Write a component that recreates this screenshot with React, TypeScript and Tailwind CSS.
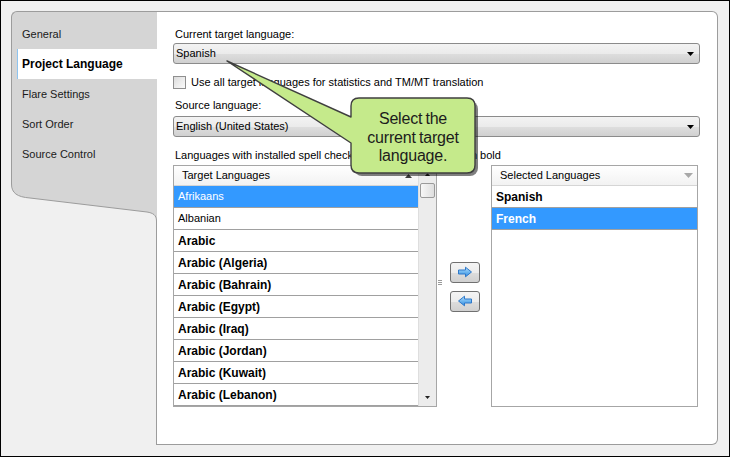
import React from 'react'

const targetRows = [
  { t: 'Afrikaans', b: false, sel: true },
  { t: 'Albanian', b: false },
  { t: 'Arabic', b: true },
  { t: 'Arabic (Algeria)', b: true },
  { t: 'Arabic (Bahrain)', b: true },
  { t: 'Arabic (Egypt)', b: true },
  { t: 'Arabic (Iraq)', b: true },
  { t: 'Arabic (Jordan)', b: true },
  { t: 'Arabic (Kuwait)', b: true },
  { t: 'Arabic (Lebanon)', b: true },
]

const selectedRows = [
  { t: 'Spanish', sel: false },
  { t: 'French', sel: true },
]

const tabs = ['General', 'Project Language', 'Flare Settings', 'Sort Order', 'Source Control']

function Caret() {
  return (
    <svg width="7" height="4" viewBox="0 0 7 4"><path d="M0 0H7L3.5 4Z" fill="#000" /></svg>
  )
}

function Dropdown({ value }: { value: string }) {
  return (
    <div className="h-[21px] flex items-center justify-between rounded-[3px] border border-[#8b8b8b] bg-[linear-gradient(to_bottom,#f3f3f3_0%,#ebebeb_50%,#dedede_51%,#d0d0d0_100%)] pl-[2px] pr-[5px]">
      <span className="text-[11px] text-black">{value}</span>
      <Caret />
    </div>
  )
}

function ArrowIcon({ left }: { left?: boolean }) {
  return (
    <svg width="16" height="12" viewBox="0 0 16 12" style={{ transform: left ? 'scaleX(-1)' : undefined }}>
      <defs>
        <linearGradient id={left ? 'al' : 'ar'} x1="0" y1="0" x2="0" y2="1">
          <stop offset="0" stopColor="#b5defc" />
          <stop offset="0.5" stopColor="#6fb7f0" />
          <stop offset="1" stopColor="#2f8ae0" />
        </linearGradient>
      </defs>
      <path d="M1.5 4H8.5V1.2L14.5 6L8.5 10.8V8H1.5Z" fill={`url(#${left ? 'al' : 'ar'})`} stroke="#2e78c9" strokeWidth="1" strokeLinejoin="round" />
    </svg>
  )
}

function MoveButton({ left }: { left?: boolean }) {
  return (
    <div className="w-[30px] h-[21px] flex items-center justify-center rounded-[3px] border border-[#707070] bg-[linear-gradient(to_bottom,#f4f4f4_0%,#ececec_50%,#dddddd_51%,#d0d0d0_100%)]">
      <ArrowIcon left={left} />
    </div>
  )
}

export default function App() {
  return (
    <div className="relative w-[730px] h-[457px] border border-black bg-[#f0f0f0] pt-[10px] pl-[10px] font-['Liberation_Sans',Arial,sans-serif] text-black overflow-hidden">
      {/* frame */}
      <div className="flex w-[707px] h-[434px]">
        {/* tabs column */}
        <div className="w-[146px] flex flex-col">
          <div className="h-[172px] bg-[#d5d5d5] border-l border-t border-[#9c9c9c] rounded-tl-[6px] pt-[7px]">
            {tabs.map((t, i) =>
              i === 1 ? (
                <div key={t} className="h-[30px] ml-[5px] bg-white border-l border-[#8ec4f0] flex items-center pl-[4px] text-[12px] font-bold">{t}</div>
              ) : (
                <div key={t} className="h-[30px] flex items-center pl-[10px] text-[11px] text-[#1a1a1a]">{t}</div>
              )
            )}
          </div>
          <svg width="146" height="40" viewBox="0 0 146 40" className="block">
            <path d="M0.5 0V1C0.5 10 6 14 19 15L136 29C142 30 145.5 32 145.5 38H146V0Z" fill="#d5d5d5" />
            <path d="M0.5 0V1C0.5 10 6 14 19 15L136 29C142 30 145.5 32 145.5 38V40" fill="none" stroke="#9c9c9c" />
          </svg>
          <div className="flex-1 border-r border-[#9c9c9c]" />
        </div>

        {/* content panel */}
        <div className="flex-1 bg-white border-t border-r border-b border-[#9c9c9c] rounded-tr-[6px] rounded-br-[6px] pl-[16px] pr-[17px] flex flex-col">
          <div className="mt-[15px] h-[14px] leading-[14px] text-[11px] pl-[2px]">Current target language:</div>
          <div className="mt-[2px]"><Dropdown value="Spanish" /></div>

          <div className="mt-[11px] h-[14px] flex items-center">
            <div className="w-[13px] h-[13px] border border-[#8f8f8f] bg-[linear-gradient(135deg,#dcdcdc,#fbfbfb)]" />
            <span className="ml-[5px] text-[11px] leading-[14px]">Use all target languages for statistics and TM/MT translation</span>
          </div>

          <div className="mt-[9px] h-[14px] leading-[14px] text-[11px] pl-[2px]">Source language:</div>
          <div className="mt-[4px]"><Dropdown value="English (United States)" /></div>

          <div className="mt-[11px] h-[14px] leading-[14px] text-[11px] pl-[2px]">Languages with installed spell check dictionaries are shown in bold</div>

          <div className="mt-[3px] flex">
            {/* target list */}
            <div className="w-[264px] h-[242px] border border-[#a6a6a6] flex">
              <div className="w-[244px] flex flex-col">
                <div className="h-[20px] border-b border-[#d5d5d5] bg-[linear-gradient(to_bottom,#ffffff,#f2f2f2)] flex items-center justify-between pl-[8px] pr-[6px]">
                  <span className="text-[11px]">Target Languages</span>
                  <svg width="7" height="4" viewBox="0 0 7 4"><path d="M0 4H7L3.5 0Z" fill="#3c3c3c" /></svg>
                </div>
                {targetRows.map((r) => (
                  <div
                    key={r.t}
                    className={`h-[22px] border-b border-[#a0a0a0] flex items-center pl-[4px] ${r.sel ? 'bg-[#3399ff] text-white' : 'bg-white'} ${r.b ? 'text-[12px] font-bold' : 'text-[11px]'}`}
                  >
                    {r.t}
                  </div>
                ))}
              </div>
              {/* scrollbar */}
              <div className="flex-1 bg-[#ececec] border-l border-[#dedede] flex flex-col items-center">
                <div className="h-[17px] flex items-center justify-center">
                  <svg width="5" height="3" viewBox="0 0 5 3"><path d="M0 3H5L2.5 0Z" fill="#222" /></svg>
                </div>
                <div className="w-[15px] h-[15px] rounded-[2px] border border-[#9a9a9a] bg-[linear-gradient(to_right,#f7f7f7,#dedede)]" />
                <div className="flex-1" />
                <div className="h-[17px] flex items-center justify-center">
                  <svg width="5" height="3" viewBox="0 0 5 3"><path d="M0 0H5L2.5 3Z" fill="#222" /></svg>
                </div>
              </div>
            </div>

            {/* grip */}
            <div className="w-[13px] h-[242px] flex items-center">
              <div className="ml-[1px] flex flex-col gap-[1px] mt-[-8px]">
                <div className="w-[4px] h-[1px] bg-[#9a9a9a]" />
                <div className="w-[4px] h-[1px] bg-[#9a9a9a]" />
                <div className="w-[4px] h-[1px] bg-[#9a9a9a]" />
              </div>
            </div>

            {/* move buttons */}
            <div className="w-[30px] h-[242px] flex flex-col justify-center gap-[8px] pt-[1px]">
              <MoveButton />
              <MoveButton left />
            </div>

            {/* selected list */}
            <div className="ml-[11px] w-[207px] h-[242px] border border-[#a6a6a6] bg-white flex flex-col">
              <div className="h-[20px] border-b border-[#d5d5d5] bg-[linear-gradient(to_bottom,#ffffff,#f2f2f2)] flex items-center justify-between pl-[8px] pr-[4px]">
                <span className="text-[11px]">Selected Languages</span>
                <svg width="9" height="5" viewBox="0 0 9 5"><path d="M0 0H9L4.5 5Z" fill="#a8a8a8" /></svg>
              </div>
              {selectedRows.map((r) => (
                <div
                  key={r.t}
                  className={`h-[22px] border-b border-[#a0a0a0] flex items-center pl-[4px] text-[12px] font-bold ${r.sel ? 'bg-[#3399ff] text-white' : 'bg-white'}`}
                >
                  {r.t}
                </div>
              ))}
            </div>
          </div>
        </div>
      </div>

      {/* callout */}
      <div className="absolute left-[-1px] top-[-1px] w-[730px] h-[457px] pointer-events-none">
        <svg width="730" height="457" viewBox="0 0 730 457" className="absolute left-0 top-0">
          <rect x="354" y="101" width="124" height="75" rx="8" fill="#000" opacity="0.5" />
          <path
            d="M359 98H467Q475 98 475 106V165Q475 173 467 173H359Q351 173 351 165V143L227 61L351 117V106Q351 98 359 98Z"
            fill="#c5ea8b"
            stroke="#3f3f3f"
            strokeWidth="1.4"
            strokeLinejoin="round"
          />
        </svg>
        <div className="absolute left-[351px] top-[110px] w-[124px] text-center text-[16px] leading-[18.5px] text-[#1c1c1c] tracking-[-0.2px] [word-spacing:-1px]">
          Select the<br />current target<br />language.
        </div>
      </div>
    </div>
  )
}
